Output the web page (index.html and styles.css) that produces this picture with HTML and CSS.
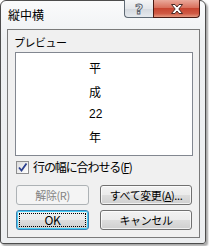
FILE: index.html
```html
<!DOCTYPE html>
<html lang="ja">
<head>
<meta charset="utf-8">
<title>縦中横</title>
<link rel="stylesheet" href="styles.css">
</head>
<body>
<div class="window">
  <div class="titlebar">
    <span class="title">縦中横</span>
    <div class="caption-buttons">
      <div class="cbtn help">
        <svg width="12" height="15" viewBox="0 0 12 15"><text x="6" y="13" text-anchor="middle" class="qmark">?</text></svg>
      </div>
      <div class="cbtn close">
        <svg width="16" height="12" viewBox="0 0 16 12"><path d="M2.5 1.5 H6 L8 4 L10 1.5 H13.5 L9.8 6 L13.5 10.5 H10 L8 8 L6 10.5 H2.5 L6.2 6 Z" fill="#ffffff" stroke="#4a2a25" stroke-width="1" stroke-linejoin="round"/></svg>
      </div>
    </div>
  </div>
  <div class="client">
    <div class="label">プレビュー</div>
    <div class="preview">
      <div class="pv-char">平</div>
      <div class="pv-char">成</div>
      <div class="pv-char pv-num">22</div>
      <div class="pv-char">年</div>
    </div>
    <div class="check-row">
      <span class="checkbox">
        <svg width="11" height="11" viewBox="0 0 11 11"><path d="M2 5.5 L4.5 8.5 L9.5 1.5" fill="none" stroke="#2b3f8e" stroke-width="1.8"/></svg>
      </span>
      <span class="check-label">行の幅に合わせる(<u>F</u>)</span>
    </div>
    <div class="btn-row first">
      <div class="btn btn-left disabled">解除(R)</div>
      <div class="btn btn-right">すべて変更(<u>A</u>)...</div>
    </div>
    <div class="btn-row">
      <div class="btn btn-left default"><span class="focus">OK</span></div>
      <div class="btn btn-right">キャンセル</div>
    </div>
  </div>
</div>
</body>
</html>
```
FILE: styles.css
```css
html, body {
  margin: 0;
  padding: 0;
  background: #ffffff;
}
body {
  width: 209px;
  height: 246px;
  overflow: hidden;
  font-family: "Noto Sans CJK JP", "DejaVu Sans", sans-serif;
}
.window {
  box-sizing: border-box;
  width: 206px;
  height: 244px;
  border: 1px solid #4d4d4d;
  border-radius: 6px 6px 3px 3px;
  background: linear-gradient(#fafbfc, #eef0f2 40px, #eceef0);
  padding: 0 5px 5px 6px;
  display: flex;
  flex-direction: column;
  box-shadow: 2px 2px 2px rgba(0,0,0,0.35);
  position: relative;
}
.titlebar {
  height: 28px;
  display: flex;
  justify-content: space-between;
  align-items: flex-start;
}
.title {
  font-size: 12px;
  line-height: 14px;
  color: #000;
  margin-top: 7px;
  margin-left: 1px;
}
.caption-buttons {
  display: flex;
  margin-top: -1px;
}
.cbtn {
  height: 18px;
  box-sizing: border-box;
  border: 1px solid #5f6a74;
  border-top: none;
  display: flex;
  align-items: center;
  justify-content: center;
}
.help {
  width: 29px;
  border-right: none;
  border-radius: 0 0 0 4px;
  background: linear-gradient(#f4f5f6, #e3e6ea 50%, #d3d8de 51%, #e6eaee);
}
.qmark {
  font-family: "DejaVu Sans", sans-serif;
  font-size: 14px;
  font-weight: bold;
  fill: #eef1f4;
  stroke: #59616b;
  stroke-width: 0.9;
}
.close {
  width: 47px;
  border-color: #4b1a12;
  border-radius: 0 0 4px 0;
  background: linear-gradient(#eaa99b, #d9705c 45%, #c74530 50%, #d05a44 80%, #e59a82);
}
.client {
  flex: 1;
  background: #f0f0f0;
  border: 1px solid #7a7a7a;
  display: flex;
  flex-direction: column;
}
.label {
  font-size: 11px;
  line-height: 14px;
  margin: 5px 0 0 6px;
  letter-spacing: -0.5px;
  height: 16px;
}
.preview {
  box-sizing: border-box;
  width: 178px;
  height: 104px;
  margin-left: 7px;
  margin-top: 1px;
  border: 1px solid #828790;
  background: #ffffff;
  display: flex;
  flex-direction: column;
  align-items: flex-start;
  padding: 8px 0 0 73px;
}
.pv-char {
  font-size: 12px;
  line-height: 14px;
  width: 12px;
  text-align: center;
  color: #000;
  margin-bottom: 10px;
}
.pv-num {
  font-family: "Liberation Sans", sans-serif;
  font-size: 12px;
  margin-top: -2px;
  margin-bottom: 9px;
}
.check-row {
  display: flex;
  align-items: center;
  margin: 4px 0 0 8px;
  height: 14px;
}
.checkbox {
  box-sizing: border-box;
  width: 13px;
  height: 13px;
  border: 1px solid #8f8f8f;
  background: linear-gradient(135deg, #dcdcdc, #ffffff);
  display: flex;
  align-items: center;
  justify-content: center;
}
.check-label {
  font-size: 12px;
  line-height: 14px;
  margin-left: 4px;
  letter-spacing: -1.1px;
}
.btn-row {
  display: flex;
  gap: 11px;
  margin-left: 8px;
  margin-top: 5px;
}
.btn-row.first {
  margin-top: 11px;
}
.btn {
  box-sizing: border-box;
  height: 20px;
  border: 1px solid #707070;
  border-radius: 3px;
  background: linear-gradient(#f2f2f2, #ebebeb 50%, #dddddd 51%, #cfcfcf);
  box-shadow: inset 0 0 0 1px rgba(255,255,255,0.7);
  font-size: 11px;
  line-height: 16px;
  display: flex;
  align-items: center;
  justify-content: center;
  color: #000;
  letter-spacing: -0.4px;
}
.btn-left { width: 73px; }
.btn-right { width: 92px; }
.btn.disabled {
  border-color: #adb2b5;
  background: #f4f4f4;
  color: #838383;
  box-shadow: none;
}
.btn.default {
  border-color: #3c7fb1;
  box-shadow: inset 0 0 0 1px #48d0f8;
  background: linear-gradient(#f2f2f2, #ebebeb 50%, #dddddd 51%, #cfcfcf);
  padding: 2px;
}
.focus {
  box-sizing: border-box;
  flex: 1;
  align-self: stretch;
  border: 1px dotted #000;
  display: flex;
  align-items: center;
  justify-content: center;
  font-size: 12px;
}
u { text-decoration: underline; }
```
